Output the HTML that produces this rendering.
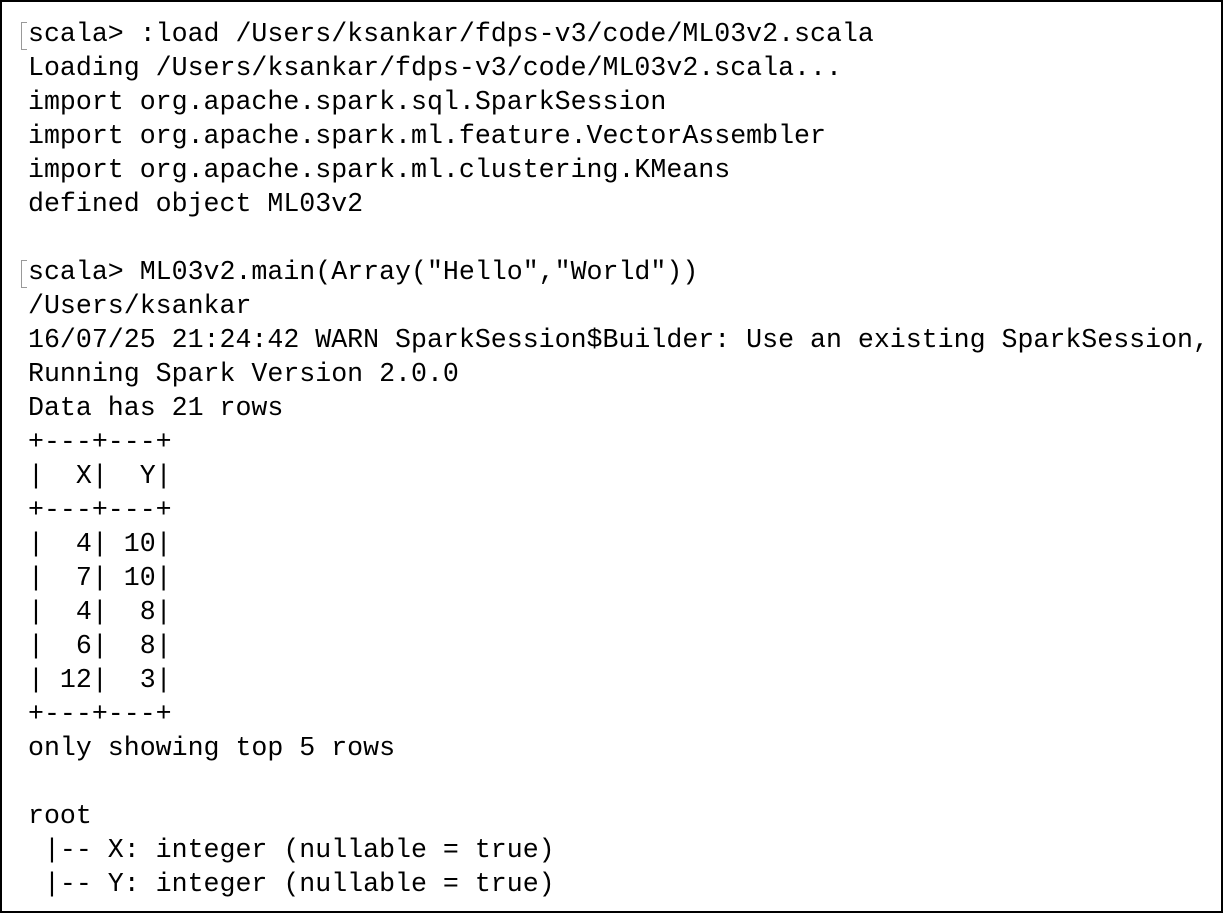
<!DOCTYPE html>
<html><head><meta charset="utf-8"><style>
html,body{margin:0;padding:0;background:#fff;}
.box{position:absolute;left:0;top:0;width:1219px;height:909px;border:2px solid #000;background:#fff;overflow:hidden;}
pre{position:absolute;left:26px;top:15px;margin:0;font-family:"Liberation Mono",monospace;font-size:26.6px;line-height:34px;color:#000;white-space:pre;}
.b{position:absolute;left:19px;width:5px;height:26px;border:1px solid #999;border-right:none;}
</style></head><body><div class="box">
<div class="b" style="top:20px"></div>
<div class="b" style="top:258px"></div>
<pre>scala&gt; :load /Users/ksankar/fdps-v3/code/ML03v2.scala
Loading /Users/ksankar/fdps-v3/code/ML03v2.scala...
import org.apache.spark.sql.SparkSession
import org.apache.spark.ml.feature.VectorAssembler
import org.apache.spark.ml.clustering.KMeans
defined object ML03v2

scala&gt; ML03v2.main(Array("Hello","World"))
/Users/ksankar
16/07/25 21:24:42 WARN SparkSession$Builder: Use an existing SparkSession,
Running Spark Version 2.0.0
Data has 21 rows
+---+---+
|  X|  Y|
+---+---+
|  4| 10|
|  7| 10|
|  4|  8|
|  6|  8|
| 12|  3|
+---+---+
only showing top 5 rows

root
 |-- X: integer (nullable = true)
 |-- Y: integer (nullable = true)</pre>
</div></body></html>
